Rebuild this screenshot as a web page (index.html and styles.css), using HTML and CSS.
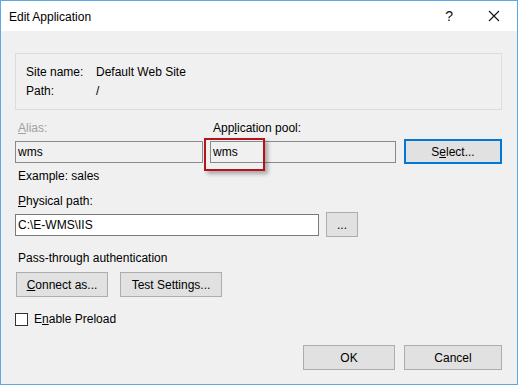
FILE: index.html
```html
<!DOCTYPE html>
<html lang="en">
<head>
    <meta charset="UTF-8">
    <title>Edit Application</title>
    <link rel="stylesheet" href="styles.css">
</head>
<body>

    <div class="window">
        <div class="titlebar">
            <span class="title">Edit Application</span>
            <span class="help">?</span>
            <svg class="close" width="12" height="12" viewBox="0 0 12 12">
                <path d="M1 1 L11 11 M11 1 L1 11" stroke="#111" stroke-width="1.1" fill="none"/>
            </svg>
        </div>

        <div class="content">
            <div class="groupbox">
                <div class="info-row"><span class="info-key">Site name:</span><span>Default Web Site</span></div>
                <div class="info-row"><span class="info-key">Path:</span><span>/</span></div>
            </div>

            <div class="alias-grid">
                <label class="label disabled"><u>A</u>lias:</label>
                <label class="label">App<u>l</u>ication pool:</label>
                <span></span>
                <div class="textbox readonly">wms</div>
                <div class="textbox readonly">wms</div>
                <button class="btn btn-select">S<u>e</u>lect...</button>
            </div>

            <div class="label example">Example: sales</div>

            <div class="label physical-label"><u>P</u>hysical path:</div>
            <div class="path-row">
                <div class="textbox path-box">C:\E-WMS\IIS</div>
                <button class="btn btn-browse">...</button>
            </div>

            <div class="label pass-label">Pass-through authentication</div>
            <div class="auth-row">
                <button class="btn btn-connect"><u>C</u>onnect as...</button>
                <button class="btn btn-test">Test Settin<u>g</u>s...</button>
            </div>

            <div class="check-row">
                <span class="checkbox"></span>
                <span>E<u>n</u>able Preload</span>
            </div>

            <div class="footer">
                <button class="btn btn-ok">OK</button>
                <button class="btn btn-cancel">Cancel</button>
            </div>
        </div>

        <!-- annotation around the pool name -->
        <div class="highlight"></div>
    </div>

</body>
</html>
```

FILE: styles.css
```css
body {
    margin: 0;
    font-family: "Segoe UI", "Liberation Sans", Arial, sans-serif;
    font-size: 12px;
    color: #000;
    background: #f0f0f0;
}
u {
    text-decoration: underline;
    text-underline-offset: 1px;
}
.window {
    position: relative;
    width: 518px;
    height: 385px;
    box-sizing: border-box;
    border: 1px solid #5ba9e6;
    background: #f0f0f0;
    overflow: hidden;
}
.titlebar {
    height: 30px;
    background: #fff;
    display: flex;
    align-items: center;
    padding-left: 8px;
}
.title {
    flex: 1;
    font-size: 12px;
    margin-top: 1px;
}
.help {
    font-size: 14px;
    color: #111;
    margin-right: 35px;
}
.close {
    margin-right: 17px;
}
.content {
    padding: 22px 15px 0 14px;
}
.groupbox {
    border: 1px solid #dcdcdc;
    padding: 9px 0 8px 10px;
}
.info-row {
    display: flex;
    line-height: 19px;
}
.info-key {
    width: 70px;
}
.label {
    display: block;
    line-height: 15px;
    padding-left: 3px;
}
.disabled {
    color: #a0a0a0;
}
.alias-grid {
    display: grid;
    grid-template-columns: 188px 186px 99px;
    column-gap: 7px;
    row-gap: 3px;
    margin-top: 11px;
    align-items: center;
}
.textbox {
    height: 22px;
    box-sizing: border-box;
    border: 1px solid #7a7a7a;
    background: #fff;
    padding-left: 2px;
    line-height: 20px;
}
.readonly {
    background: #f0f0f0;
    border-color: #8a8a8a;
}
.btn {
    font-family: inherit;
    font-size: 12px;
    color: #000;
    height: 25px;
    box-sizing: border-box;
    background: #e1e1e1;
    border: 1px solid #adadad;
    padding: 0;
    margin: 0;
}
.btn-select {
    width: 98px;
    justify-self: end;
    border: 2px solid #0078d7;
}
.example {
    margin-top: 5px;
}
.physical-label {
    margin-top: 10px;
}
.path-row {
    display: flex;
    align-items: center;
    margin-top: 3px;
}
.path-box {
    width: 304px;
}
.btn-browse {
    width: 32px;
    margin-left: 7px;
}
.pass-label {
    margin-top: 14px;
}
.auth-row {
    display: flex;
    margin-top: 6px;
    padding-left: 1px;
}
.btn-connect {
    width: 92px;
}
.btn-test {
    width: 102px;
    margin-left: 12px;
}
.check-row {
    display: flex;
    align-items: center;
    line-height: 15px;
    margin-top: 15px;
}
.checkbox {
    width: 13px;
    height: 13px;
    box-sizing: border-box;
    border: 1px solid #333;
    background: #fff;
    margin-right: 6px;
}
.footer {
    display: flex;
    justify-content: flex-end;
    margin-top: 18px;
}
.btn-ok {
    width: 92px;
}
.btn-cancel {
    width: 98px;
    margin-left: 9px;
}
.highlight {
    position: absolute;
    left: 203px;
    top: 137px;
    width: 61px;
    height: 33px;
    box-sizing: border-box;
    border: 2px solid #b3141c;
    box-shadow: 3px 3px 4px rgba(0, 0, 0, 0.3);
}
```
